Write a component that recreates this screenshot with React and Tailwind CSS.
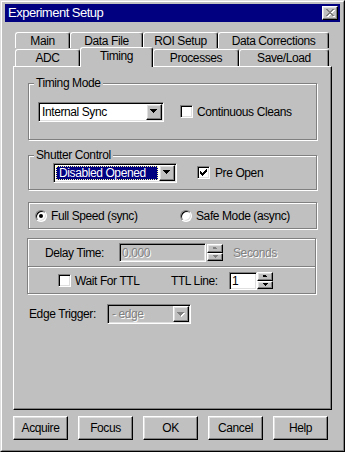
import React from "react";

const font = "font-['Liberation_Sans',Arial,sans-serif] text-[12px] tracking-[-0.4px] leading-[14px]";
const dis = "text-[#808080] [text-shadow:1px_1px_0_#fff]";
const raised = "border border-t-white border-l-white border-r-black border-b-black shadow-[inset_-1px_-1px_0_#808080,inset_1px_1px_0_#dfdfdf]";
const sunken = "border border-t-[#808080] border-l-[#808080] border-r-white border-b-white shadow-[inset_1px_1px_0_#000,inset_-1px_-1px_0_#dfdfdf]";
const etched = "border border-[#808080] shadow-[inset_1px_1px_0_#fff,1px_1px_0_#fff]";

function Tri({ disabled, up }) {
  const d = up
    ? "M3 0h1v1h1v1h1v1h1v1h-7v-1h1v-1h1v-1h1z"
    : "M0 0h7v1h-1v1h-1v1h-1v1h-1v-1h-1v-1h-1v-1h-1z";
  return (
    <svg width="8" height="5" viewBox="0 0 8 5" shapeRendering="crispEdges">
      {disabled && <path d={d} fill="#fff" transform="translate(1 1)" />}
      <path d={d} fill={disabled ? "#808080" : "#000"} />
    </svg>
  );
}

function SmallTri({ up, disabled }) {
  const d = up ? "M2 0h1v1h1v1h-5v-1h1v-1h1z" : "M0 0h5v1h-1v1h-1v1h-1v-1h-1v-1h-1z";
  return (
    <svg width="5" height="3" viewBox="0 0 5 3" shapeRendering="crispEdges">
      <path d={d} fill={disabled ? "#808080" : "#000"} />
    </svg>
  );
}

function Combo({ className, text, selected, disabled }) {
  return (
    <div className={`${sunken} p-[1px] flex h-[20px] ${disabled ? "bg-[#c0c0c0]" : "bg-white"} ${className}`}>
      <div className="flex-1 flex items-center pl-[1px] pr-[1px]">
        {selected ? (
          <div className="w-full h-[14px] bg-[#000080] border border-dotted border-[#ffffa0] text-white flex items-center pl-[2px] leading-[12px]">
            {text}
          </div>
        ) : (
          <span className={disabled ? `${dis} pl-[2px]` : "pl-[1px]"}>{text}</span>
        )}
      </div>
      <div className={`${raised} w-[16px] bg-[#c0c0c0] flex items-center justify-center`}>
        <Tri disabled={disabled} />
      </div>
    </div>
  );
}

function Check({ checked }) {
  return (
    <div className={`${sunken} w-[13px] h-[13px] bg-white flex items-center justify-center shrink-0`}>
      {checked && (
        <svg width="7" height="7" viewBox="0 0 7 7" shapeRendering="crispEdges">
          <path
            fill="#000"
            d="M6 0h1v1h-1z M5 1h2v1h-2z M0 2h1v1h-1z M4 2h3v1h-3z M0 3h2v1h-2z M3 3h3v1h-3z M0 4h5v1h-5z M1 5h3v1h-3z M2 6h1v1h-1z"
          />
        </svg>
      )}
    </div>
  );
}

function Radio({ checked }) {
  return (
    <div className="w-[12px] h-[12px] rounded-full border border-t-[#808080] border-l-[#808080] border-r-white border-b-white bg-white shadow-[inset_1px_1px_0_#000,inset_-1px_-1px_0_#dfdfdf] flex items-center justify-center shrink-0">
      {checked && <div className="w-[4px] h-[4px] rounded-full bg-black" />}
    </div>
  );
}

function Spin({ disabled }) {
  return (
    <div className="flex flex-col w-[16px] h-[17px]">
      <div className={`${raised} flex-1 bg-[#c0c0c0] flex items-center justify-center`}>
        <SmallTri up disabled={disabled} />
      </div>
      <div className={`${raised} flex-1 bg-[#c0c0c0] flex items-center justify-center`}>
        <SmallTri disabled={disabled} />
      </div>
    </div>
  );
}

function Btn({ children }) {
  return (
    <div className={`${raised} w-[55px] h-[24px] bg-[#c0c0c0] flex items-center justify-center`}>
      {children}
    </div>
  );
}

const tab = "flex items-center justify-center border-t border-l border-r border-t-white border-l-white border-r-black rounded-t-[3px] shadow-[inset_-1px_0_0_#808080] bg-[#c0c0c0]";

export default function App() {
  return (
    <div className={`${font} text-black w-[345px] h-[452px] bg-[#c0c0c0]`}>
      <div className="w-[345px] h-[452px] border border-t-[#dfdfdf] border-l-[#dfdfdf] border-r-black border-b-black">
        <div className="w-full h-full border border-t-white border-l-white border-r-[#808080] border-b-[#808080] p-[2px] flex flex-col">
          {/* Title bar */}
          <div className="h-[18px] bg-[#000080] flex items-center justify-between pl-[3px] pr-[2px] ml-[1px] mr-[1px]">
            <span className="text-white text-[13px] tracking-[-0.5px]">Experiment Setup</span>
            <div className={`${raised} w-[16px] h-[14px] bg-[#c0c0c0] flex items-center justify-center`}>
              <svg width="9" height="8" viewBox="0 0 9 8" shapeRendering="crispEdges">
                <g transform="translate(1 1)" fill="#fff">
                  <path d="M0 0h2v1h1v1h2v-1h1v-1h2v1h-1v1h-1v1h-1v1h1v1h1v1h1v1h-2v-1h-1v-1h-2v1h-1v1h-2v-1h1v-1h1v-1h1v-1h-1v-1h-1v-1h-1z" />
                </g>
                <path fill="#808080" d="M0 0h2v1h1v1h2v-1h1v-1h2v1h-1v1h-1v1h-1v1h1v1h1v1h1v1h-2v-1h-1v-1h-2v1h-1v1h-2v-1h1v-1h1v-1h1v-1h-1v-1h-1v-1h-1z" />
              </svg>
            </div>
          </div>

          {/* Tabs */}
          <div className="mt-[10px] ml-[9px] flex flex-col">
            <div className="flex h-[16px] pl-[2px]">
              <div className={`${tab} w-[55px] h-[16px]`}>Main</div>
              <div className={`${tab} w-[73px] h-[16px]`}>Data File</div>
              <div className={`${tab} w-[75px] h-[16px]`}>ROI Setup</div>
              <div className={`${tab} w-[111px] h-[16px]`}>Data Corrections</div>
            </div>
            <div className="flex h-[18px] items-end pl-[2px]">
              <div className={`${tab} w-[65px] h-[17px]`}>ADC</div>
              <div className={`${tab} relative z-10 w-[73px] h-[20px] mb-[-1px] pb-[3px]`}>Timing</div>
              <div className={`${tab} w-[86px] h-[17px]`}>Processes</div>
              <div className={`${tab} w-[90px] h-[17px]`}>Save/Load</div>
            </div>

            {/* Panel */}
            <div className="w-[319px] h-[344px] border border-t-white border-l-white border-r-black border-b-black shadow-[inset_-1px_-1px_0_#808080] pl-[14px] pt-[16px] flex flex-col">
              {/* Timing Mode */}
              <div className={`${etched} relative w-[289px] h-[57px] flex items-center pl-[9px]`}>
                <span className="absolute left-[5px] top-[-8px] px-[2px] bg-[#c0c0c0]">Timing Mode</span>
                <Combo className="w-[126px]" text="Internal Sync" />
                <div className="ml-[16px] flex items-center">
                  <Check />
                  <span className="ml-[4px]">Continuous Cleans</span>
                </div>
              </div>

              {/* Shutter Control */}
              <div className={`${etched} relative mt-[15px] w-[289px] h-[35px] flex items-center pl-[24px]`}>
                <span className="absolute left-[5px] top-[-8px] px-[2px] bg-[#c0c0c0]">Shutter Control</span>
                <Combo className="w-[124px]" text="Disabled Opened" selected />
                <div className="ml-[20px] flex items-center">
                  <Check checked />
                  <span className="ml-[5px]">Pre Open</span>
                </div>
              </div>

              {/* Radios */}
              <div className={`${etched} mt-[12px] w-[289px] h-[27px] flex items-center pl-[6px]`}>
                <div className="w-[145px] flex items-center">
                  <Radio checked />
                  <span className="ml-[4px]">Full Speed (sync)</span>
                </div>
                <div className="flex items-center">
                  <Radio />
                  <span className="ml-[4px]">Safe Mode (async)</span>
                </div>
              </div>

              {/* Delay / TTL */}
              <div className={`${etched} mt-[9px] ml-[-1px] w-[289px] h-[56px] flex flex-col`}>
                <div className="h-[28px] border-b border-[#808080] flex items-center pl-[17px]">
                  <span className="w-[74px]">Delay Time:</span>
                  <div className={`${sunken} w-[87px] h-[19px] bg-[#c0c0c0] flex items-center pl-[2px]`}>
                    <span className={dis}>0.000</span>
                  </div>
                  <div className="ml-[1px]">
                    <Spin disabled />
                  </div>
                  <span className={`${dis} ml-[10px]`}>Seconds</span>
                </div>
                <div className="flex-1 border-t border-white flex items-center pl-[30px]">
                  <Check />
                  <span className="ml-[4px] w-[96px]">Wait For TTL</span>
                  <span className="w-[58px]">TTL Line:</span>
                  <div className={`${sunken} w-[28px] h-[18px] bg-white flex items-center pl-[2px]`}>
                    <span>1</span>
                  </div>
                  <Spin />
                </div>
              </div>

              {/* Edge Trigger */}
              <div className="mt-[10px] ml-[1px] flex items-center">
                <span className="w-[78px]">Edge Trigger:</span>
                <Combo className="w-[84px]" text="- edge" disabled />
              </div>
            </div>
          </div>

          {/* Buttons */}
          <div className="mt-[6px] ml-[9px] flex gap-[10px]">
            <Btn>Acquire</Btn>
            <Btn>Focus</Btn>
            <Btn>OK</Btn>
            <Btn>Cancel</Btn>
            <Btn>Help</Btn>
          </div>
        </div>
      </div>
    </div>
  );
}
